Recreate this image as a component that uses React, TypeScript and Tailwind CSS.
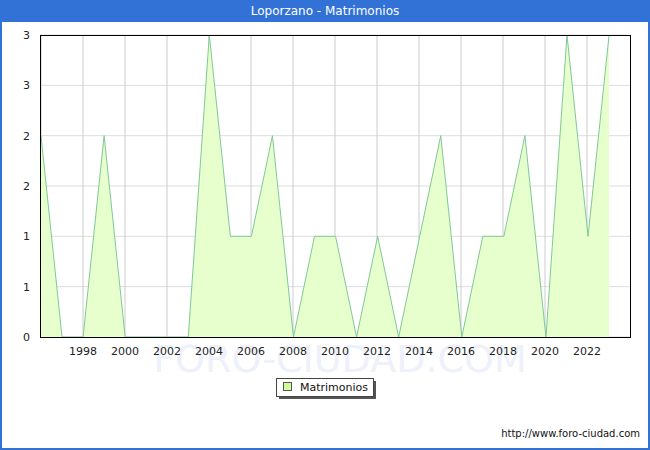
const data=[2,0,0,2,0,0,0,0,3,1,1,2,0,1,1,0,1,0,1,2,0,1,1,2,0,3,1,3];
const X=(i:number)=>41+i*21.04;const Y=(v:number)=>337-v*100.67;
export default function App(){
const pts=data.map((v,i)=>`${X(i)},${Y(v)}`).join(" ");
const area=`${X(0)},337 ${pts} ${X(27)},337`;
const yl=["0","1","1","2","2","3","3"];
return(<div className="w-[650px] h-[450px] bg-[#3272d6] flex flex-col" style={{fontFamily:'"DejaVu Sans",sans-serif'}}>
<div className="h-[22px] flex items-center justify-center text-white text-[12px]">Loporzano - Matrimonios</div>
<div className="flex-1 mx-[2px] mb-[2px] bg-white relative">
<svg width="646" height="426" className="absolute left-0 top-0" viewBox="2 22 646 426">
<text x="340" y="372" textAnchor="middle" fontSize="38" fill="#eef0fa" fontFamily="DejaVu Sans">FORO-CIUDAD.COM</text>
{[0,1,2,3,4,5,6].map(k=><line key={k} x1="40" x2="630" y1={337-k*50.33} y2={337-k*50.33} stroke="#dddddd"/>)}
{Array.from({length:14}).map((_,k)=><line key={k} x1={41+k*42} x2={41+k*42} y1="35" y2="337" stroke="#cccccc"/>)}
<polygon points={area} fill="#e6ffcc"/>
<polyline points={pts} fill="none" stroke="#80c898" strokeWidth="1"/>
<rect x="40.5" y="35.5" width="590" height="302" fill="none" stroke="#000"/>
{yl.map((t,k)=><text key={k} x="30" y={337-k*50.33+4} textAnchor="end" fontSize="11" fill="#222">{t}</text>)}
{Array.from({length:13}).map((_,k)=><text key={k} x={83+k*42} y="355" textAnchor="middle" fontSize="11" fill="#222">{1998+2*k}</text>)}
<rect x="279" y="381" width="97" height="18" fill="#555"/>
<rect x="276.5" y="378.5" width="97" height="18" fill="#fff" stroke="#444"/>
<rect x="283.5" y="382.5" width="8" height="8" fill="#ccff99" stroke="#555"/>
<text x="300" y="391" fontSize="11" fill="#111">Matrimonios</text>
<text x="640" y="437" textAnchor="end" fontSize="10" fill="#111">http://www.foro-ciudad.com</text>
</svg></div></div>);}
